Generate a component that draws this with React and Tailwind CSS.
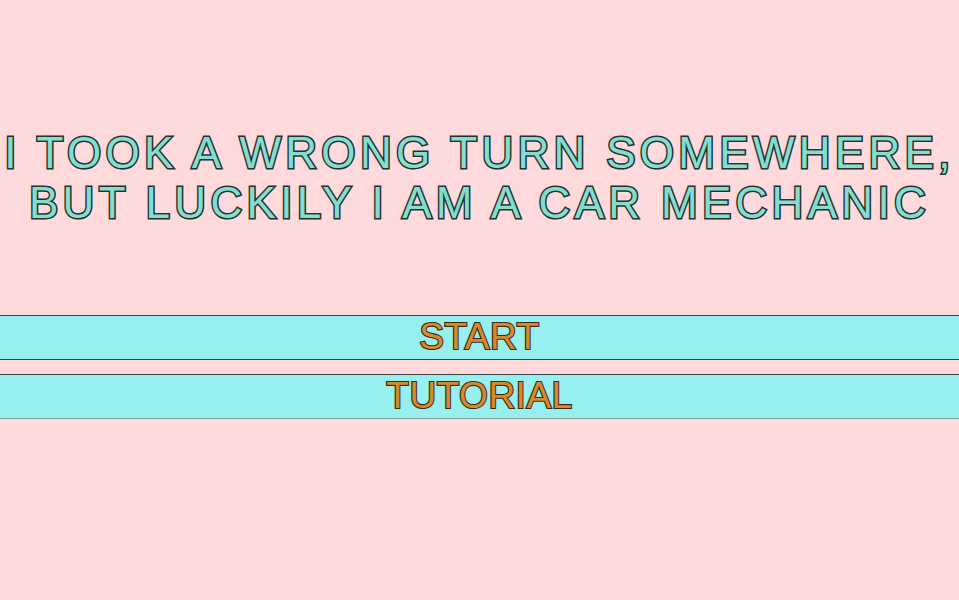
export default function App() {
  return (
    <div className="min-h-[600px] w-full bg-[#ffdadd] font-['Liberation_Sans',Arial,sans-serif] flex flex-col items-center pt-[128px]">
      <h1 className="text-center text-[44px] leading-[50px] tracking-[4.3px] text-[#82dfd0] [-webkit-text-stroke:3px_#26302e] [paint-order:stroke_fill]">
        <div>I TOOK A WRONG TURN SOMEWHERE,</div>
        <div>BUT LUCKILY I AM A CAR MECHANIC</div>
      </h1>
      <div className="w-full mt-[87px] flex flex-col gap-[14px]">
        <button className="w-full h-[45px] bg-[#97eff0] border-y border-[#3c4446] text-[37px] leading-[42px] tracking-[0.5px] text-[#d88a2a] [-webkit-text-stroke:2.2px_#3a2a14] [paint-order:stroke_fill] flex justify-center items-start">
          START
        </button>
        <button className="w-full h-[45px] bg-[#97eff0] border-t border-b border-t-[#3c4446] border-b-[#7f9fa1] text-[37px] leading-[42px] tracking-[0.5px] text-[#d88a2a] [-webkit-text-stroke:2.2px_#3a2a14] [paint-order:stroke_fill] flex justify-center items-start">
          TUTORIAL
        </button>
      </div>
    </div>
  );
}
